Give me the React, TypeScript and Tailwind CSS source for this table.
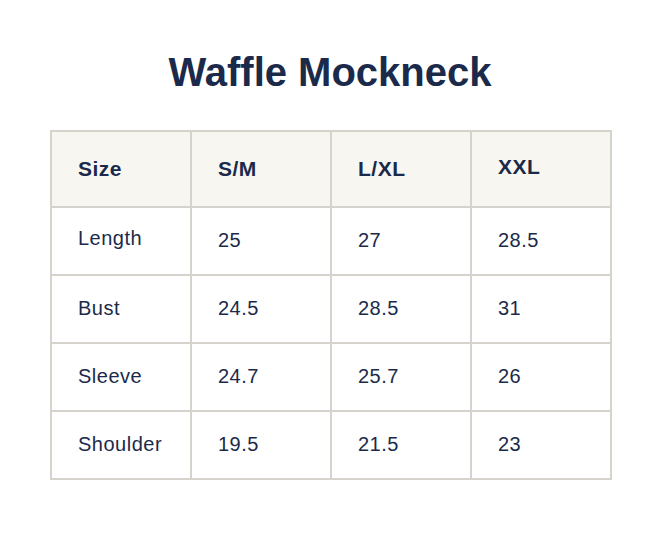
const sizes = ["S/M", "L/XL", "XXL"];

const rows = [
  { label: "Length", values: ["25", "27", "28.5"] },
  { label: "Bust", values: ["24.5", "28.5", "31"] },
  { label: "Sleeve", values: ["24.7", "25.7", "26"] },
  { label: "Shoulder", values: ["19.5", "21.5", "23"] },
];

export default function App() {
  return (
    <div
      className="w-[660px] h-[548px] bg-white text-[#1b2a4a]"
      style={{ fontFamily: '"Liberation Sans", Arial, sans-serif' }}
    >
      <h1 className="pt-[48px] text-center text-[40px] leading-[48px] font-bold">
        Waffle Mockneck
      </h1>

      <div className="mt-[34px] ml-[50px] w-[562px] grid grid-cols-4 border-l-2 border-t-2 border-[#d6d3cd]">
        <div className="h-[76px] flex items-center pl-[26px] bg-[#f8f6f1] border-r-2 border-b-2 border-[#d6d3cd] text-[21px] tracking-[0.5px] font-bold">
          Size
        </div>
        {sizes.map((s) => (
          <div
            key={s}
            className={`h-[76px] flex items-center pl-[26px] bg-[#f8f6f1] border-r-2 border-b-2 border-[#d6d3cd] text-[21px] tracking-[0.5px] font-bold ${
              s === "XXL" ? "pb-[4px]" : ""
            }`}
          >
            {s}
          </div>
        ))}

        {rows.map((row, i) => (
          <div key={row.label} className="contents">
            <div
              className={`h-[68px] flex items-center pl-[26px] border-r-2 border-b-2 border-[#d6d3cd] text-[20px] tracking-[0.5px] ${
                i === 0 ? "pb-[6px]" : "pb-[2px]"
              }`}
            >
              {row.label}
            </div>
            {row.values.map((v, j) => (
              <div
                key={j}
                className="h-[68px] flex items-center pl-[26px] pb-[2px] border-r-2 border-b-2 border-[#d6d3cd] text-[20px] tracking-[0.5px]"
              >
                {v}
              </div>
            ))}
          </div>
        ))}
      </div>
    </div>
  );
}
